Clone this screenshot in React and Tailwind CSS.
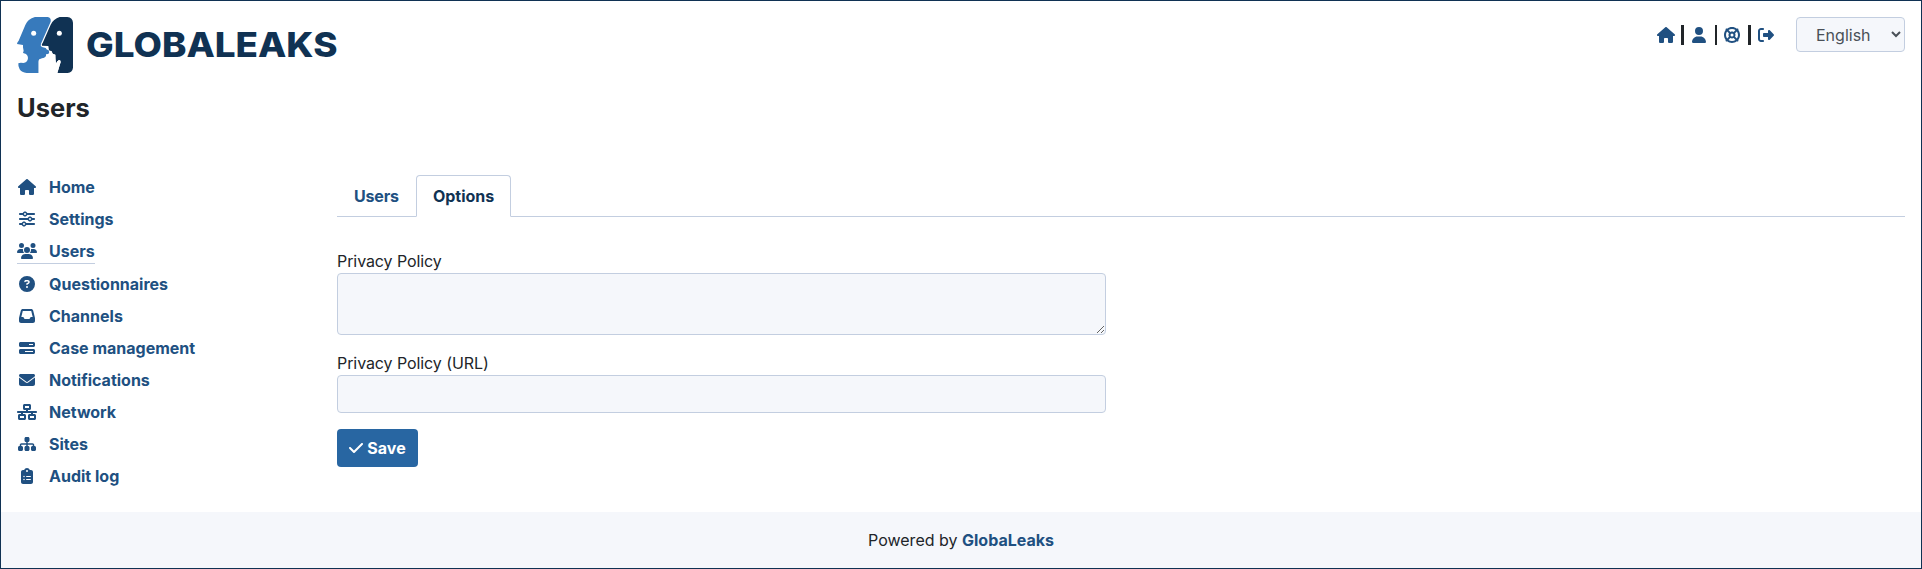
import {
  FaHouse, FaUser, FaLifeRing, FaRightFromBracket, FaSliders, FaUsers, FaCircleQuestion,
  FaInbox, FaBarsProgress, FaEnvelope, FaNetworkWired, FaSitemap, FaClipboardList, FaCheck,
} from "react-icons/fa6";

const NAV = [
  ["Home", FaHouse],
  ["Settings", FaSliders],
  ["Users", FaUsers],
  ["Questionnaires", FaCircleQuestion],
  ["Channels", FaInbox],
  ["Case management", FaBarsProgress],
  ["Notifications", FaEnvelope],
  ["Network", FaNetworkWired],
  ["Sites", FaSitemap],
  ["Audit log", FaClipboardList],
];

function Logo() {
  return (
    <svg className="block h-14 w-[322px]" viewBox="0 0 322 56" role="img" aria-label="GlobaLeaks">
      <g transform="scale(0.33333) translate(-21 -21)">
        <path fill="#377abc" d="M75 21H113Q124 23 122 35L93 101Q90 108 96 111L107 114Q109 119 116 121L118 128Q118 132 108 133Q110 141 101 145L89 148Q85 150 86 155V189H50Q35 188 29 178Q24 170 25 160Q30 157 40 159Q53 157 54 144Q53 132 41 130Q37 129 41 123L39 112V105L21 102Q21 97 26 92L46 45Q53 27 75 21Z" />
        <path fill="#103253" d="M149 21H172Q188 23 189 38V173Q187 188 173 189H142L152 156Q152 150 147 150Q140 153 138 161Q136 148 136 134L128 131L125 124L117 121L115 108L96 107Q94 103 98 99L122 44Q130 27 149 21Z" />
        <path fill="#fff" d="M86 189V155Q86 149 90 147L100 144Q110 141 109 134Q119 132 118 127L124 123L128 131L136 134Q136 148 138 161Q140 153 147 150Q152 150 152 156L142 189Z" />
        <circle cx="71" cy="70" r="7.5" fill="#fff" />
        <circle cx="148" cy="70" r="7.5" fill="#fff" />
      </g>
      <text x="69" y="40" textLength="251.5" lengthAdjust="spacingAndGlyphs" fill="#103253" className="font-['Inter',sans-serif] text-[34px] font-extrabold">GLOBALEAKS</text>
    </svg>
  );
}

export default function App() {
  return (
    <div className="flex h-[569px] flex-col border border-[#103253] bg-white font-['Inter',sans-serif] text-base leading-6 text-[#212529]">
      <header className="flex items-start justify-between px-4 pt-4">
        <Logo />
        <div className="flex items-center">
          <div className="flex items-center text-[#205081]">
            <FaHouse className="h-4 w-[18px]" />
            <span className="ml-1.5 mr-2 h-5 w-[3px] bg-[#212529]" />
            <FaUser className="h-4 w-3.5" />
            <span className="ml-[9px] mr-[7px] h-5 w-0.5 bg-[#212529]" />
            <FaLifeRing className="h-4 w-4" />
            <span className="ml-2 mr-[7px] h-5 w-[3px] bg-[#212529]" />
            <FaRightFromBracket className="h-4 w-4" />
          </div>
          <select className="ml-[22px] h-[35px] w-[109px] rounded border border-[#c3cee0] bg-[#f5f7fb] pl-[15px] text-base text-[#495057]">
            <option>English</option>
          </select>
        </div>
      </header>
      <h1 className="mt-5 px-4 text-[25.5px] leading-[30px] font-bold">Users</h1>
      <div className="mt-12 flex flex-1 px-4">
        <nav className="flex w-80 shrink-0 flex-col items-start font-bold text-[#205081]">
          {NAV.map(([label, Icon]) => (
            <div key={label} className="py-1">
              <a className={label === "Users" ? "flex items-center border-b border-[#c3cee0]" : "flex items-center"}>
                <Icon className="mr-3 h-4 w-5 shrink-0" />
                {label}
              </a>
            </div>
          ))}
        </nav>
        <main className="flex flex-1 flex-col items-start pt-1">
          <div className="flex w-full border-b border-[#c3cee0] font-bold">
            <a className="-mb-px border border-transparent px-4 py-2 tracking-[-0.01em] text-[#205081]">Users</a>
            <a className="-mb-px rounded-t border border-[#c3cee0] border-b-white bg-white px-4 py-2 text-[#103253]">Options</a>
          </div>
          <label className="mt-8 tracking-[-0.005em]">Privacy Policy</label>
          <textarea className="block h-[62px] w-[769px] rounded border border-[#c3cee0] bg-[#f5f7fb]" />
          <label className="mt-4 tracking-[-0.005em]">Privacy Policy (URL)</label>
          <input className="h-[38px] w-[769px] rounded border border-[#c3cee0] bg-[#f5f7fb]" />
          <button className="mt-4 flex h-[38px] w-[81px] items-center justify-center gap-1 rounded bg-[#2866a2] font-bold text-white">
            <FaCheck className="h-4 w-3.5" />Save
          </button>
        </main>
      </div>
      <footer className="h-14 bg-[#f5f7fb] py-4 text-center">
        Powered by <a className="font-bold text-[#205081]">GlobaLeaks</a>
      </footer>
    </div>
  );
}
